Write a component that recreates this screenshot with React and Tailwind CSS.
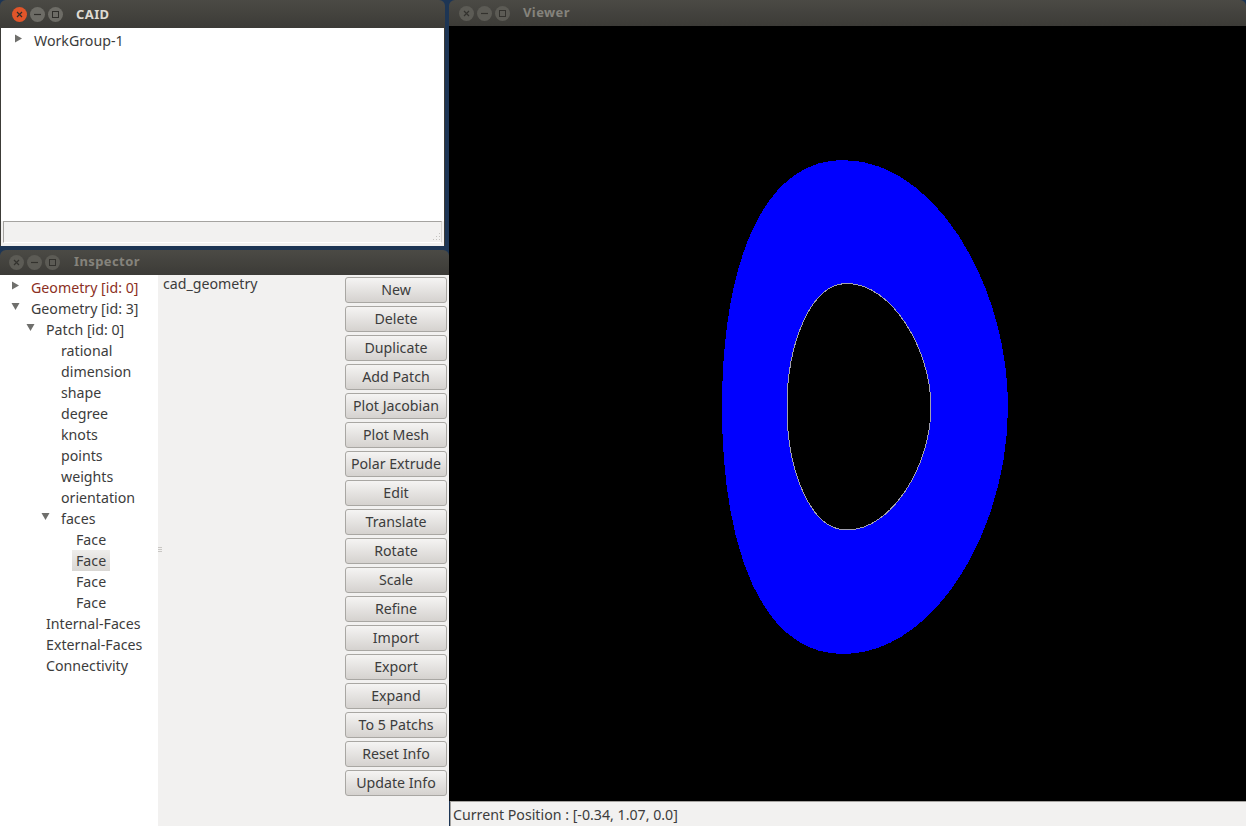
const font = { fontFamily: '"Noto Sans", "Open Sans", sans-serif' };

const buttons = [
  "New",
  "Delete",
  "Duplicate",
  "Add Patch",
  "Plot Jacobian",
  "Plot Mesh",
  "Polar Extrude",
  "Edit",
  "Translate",
  "Rotate",
  "Scale",
  "Refine",
  "Import",
  "Export",
  "Expand",
  "To 5 Patchs",
  "Reset Info",
  "Update Info",
];

const tree = [
  { label: "Geometry [id: 0]", depth: 0, arrow: "right", red: true },
  { label: "Geometry [id: 3]", depth: 0, arrow: "down" },
  { label: "Patch [id: 0]", depth: 1, arrow: "down" },
  { label: "rational", depth: 2 },
  { label: "dimension", depth: 2 },
  { label: "shape", depth: 2 },
  { label: "degree", depth: 2 },
  { label: "knots", depth: 2 },
  { label: "points", depth: 2 },
  { label: "weights", depth: 2 },
  { label: "orientation", depth: 2 },
  { label: "faces", depth: 2, arrow: "down" },
  { label: "Face", depth: 3 },
  { label: "Face", depth: 3, selected: true },
  { label: "Face", depth: 3 },
  { label: "Face", depth: 3 },
  { label: "Internal-Faces", depth: 1 },
  { label: "External-Faces", depth: 1 },
  { label: "Connectivity", depth: 1 },
];

function Arrow({ dir }) {
  return (
    <svg width="9" height="9" viewBox="0 0 9 9" className="shrink-0">
      {dir === "right" ? (
        <polygon points="1,0.5 8,4.5 1,8.5" fill="#6f6f6c" />
      ) : (
        <polygon points="0.5,1 8.5,1 4.5,8" fill="#6f6f6c" />
      )}
    </svg>
  );
}

function WindowButtons({ active }) {
  const ring = active ? "bg-[#6d6c66]" : "bg-[#5c5b55]";
  const mark = active ? "#2f2e2a" : "#33322e";
  return (
    <div className="flex gap-[3px]">
      <div
        className={
          "w-[15px] h-[15px] rounded-full flex items-center justify-center " +
          (active ? "bg-[#e0552a]" : ring)
        }
      >
        <svg width="9" height="9" viewBox="0 0 9 9">
          <path d="M2 2 L7 7 M7 2 L2 7" stroke={mark} strokeWidth="1.2" />
        </svg>
      </div>
      <div className={"w-[15px] h-[15px] rounded-full flex items-center justify-center " + ring}>
        <svg width="9" height="9" viewBox="0 0 9 9">
          <path d="M1 4.5 H8" stroke={mark} strokeWidth="1.2" />
        </svg>
      </div>
      <div className={"w-[15px] h-[15px] rounded-full flex items-center justify-center " + ring}>
        <svg width="9" height="9" viewBox="0 0 9 9">
          <rect x="1.5" y="1.5" width="6" height="6" fill="none" stroke={mark} strokeWidth="1" />
        </svg>
      </div>
    </div>
  );
}

function TitleBar({ title, active, className, titleClass }) {
  return (
    <div
      className={
        "flex items-center shrink-0 rounded-t-[6px] bg-gradient-to-b from-[#4b4a45] to-[#3c3b37] " +
        className
      }
    >
      <WindowButtons active={active} />
      <span
        className={
          "ml-[13px] text-[13px] font-bold tracking-[0.4px] " +
          (active ? "text-[#dfdbd2] " : "text-[#85837c] ") +
          (titleClass || "")
        }
      >
        {title}
      </span>
    </div>
  );
}

function TreeRow({ item }) {
  const left = 11 + item.depth * 15;
  return (
    <div className="h-[21px] flex items-center relative" style={{ paddingLeft: left }}>
      <div className="w-[9px] mr-[11px] -mt-[4px] flex">
        {item.arrow && <Arrow dir={item.arrow} />}
      </div>
      <span
        className={
          "px-[4px] -ml-[4px] h-[21px] leading-[21px] whitespace-nowrap " +
          (item.red ? "text-[#8c3024] " : "text-[#3c3c3c] ") +
          (item.selected ? "bg-gradient-to-b from-[#eeedeb] to-[#d9d7d4] text-[#2c2c2c]" : "")
        }
      >
        {item.label}
      </span>
    </div>
  );
}

function Ring() {
  return (
    <svg className="absolute inset-0" width="797" height="775" viewBox="449 26 797 775" shapeRendering="crispEdges">
      <path
        d="M843 160 C935 160 1008 285 1008 407 C1008 529 935 654 843 654 C760 654 722 545 722 407 C722 270 760 160 843 160 Z"
        fill="#0000ff"
      />
      <path
        d="M847 283.5 C892 283.5 931 350 931 407 C931 465 892 530 847 530 C810 530 787 470 787 407 C787 345 810 283.5 847 283.5 Z"
        fill="#000000"
        stroke="#a0a0b0"
        strokeWidth="1"
      />
    </svg>
  );
}

export default function App() {
  return (
    <div className="relative w-[1246px] h-[826px] overflow-hidden bg-[#1d3554] text-[14.2px]" style={font}>
      {/* CAID */}
      <div className="absolute left-0 top-0 w-[445px] h-[246px] flex flex-col">
        <TitleBar title="CAID" active className="h-[28px] pl-[12px]" titleClass="mt-px" />
        <div className="flex-1 bg-white pt-[2px] border-x border-[#3c3b37]">
          <div className="h-[21px] flex items-center pl-[13px]">
            <div className="-mt-[4px] mr-[11px] flex">
              <Arrow dir="right" />
            </div>
            <span className="text-[#3c3c3c]">WorkGroup-1</span>
          </div>
        </div>
        <div className="h-[25px] shrink-0 bg-[#f2f1f0] pl-[2px] pr-[2px] pb-[3px] flex border-x border-[#3c3b37] relative">
          <div className="flex-1 border border-[#a5a3a0] border-b-white border-r-[#d8d6d3]" />
          <svg className="absolute right-[3px] bottom-[4px]" width="10" height="10" viewBox="0 0 10 10">
            <path d="M8 1h1v1H8zM5 4h1v1H5zM8 4h1v1H8zM2 7h1v1H2zM5 7h1v1H5zM8 7h1v1H8z" fill="#c4c2bf" />
          </svg>
        </div>
      </div>

      {/* Inspector */}
      <div className="absolute left-0 top-[250px] w-[449px] h-[576px] flex flex-col">
        <TitleBar title="Inspector" className="h-[25px] pl-[9px]" titleClass="-mt-px ml-[14px]" />
        <div className="flex-1 flex bg-[#f2f1f0] min-h-0">
          <div className="w-[158px] bg-white pt-[2px] shrink-0">
            {tree.map((item, i) => (
              <TreeRow key={i} item={item} />
            ))}
          </div>
          <div className="flex-1 pl-[5px] relative leading-[17px]">
            <span className="text-[#3c3c3c]">cad_geometry</span>
            <div className="absolute left-0 top-[272px] w-[4px] flex flex-col gap-[1px]">
              <div className="h-px bg-[#c9c7c4]" />
              <div className="h-px bg-[#c9c7c4]" />
              <div className="h-px bg-[#c9c7c4]" />
            </div>
          </div>
          <div className="w-[104px] shrink-0 pt-[2px] pr-[2px] flex flex-col gap-[3px]">
            {buttons.map((b) => (
              <button
                key={b}
                className="h-[26px] rounded-[3px] border border-[#a9a7a3] bg-gradient-to-b from-[#f5f4f3] to-[#d5d2cf] text-[#3c3c3c] text-center whitespace-nowrap leading-none"
              >
                {b}
              </button>
            ))}
          </div>
        </div>
      </div>

      {/* Viewer */}
      <div className="absolute left-[449px] top-0 w-[797px] h-[826px] flex flex-col">
        <TitleBar title="Viewer" className="h-[26px] pl-[10px]" />
        <div className="flex-1 bg-black relative">
          <Ring />
        </div>
        <div className="h-[25px] shrink-0 bg-[#f2f1f0] border-t border-l border-[#a5a3a0] ml-px pl-[2px] pt-[2px] flex items-center text-[#3c3c3c]">
          Current Position : [-0.34, 1.07, 0.0]
        </div>
      </div>
    </div>
  );
}
